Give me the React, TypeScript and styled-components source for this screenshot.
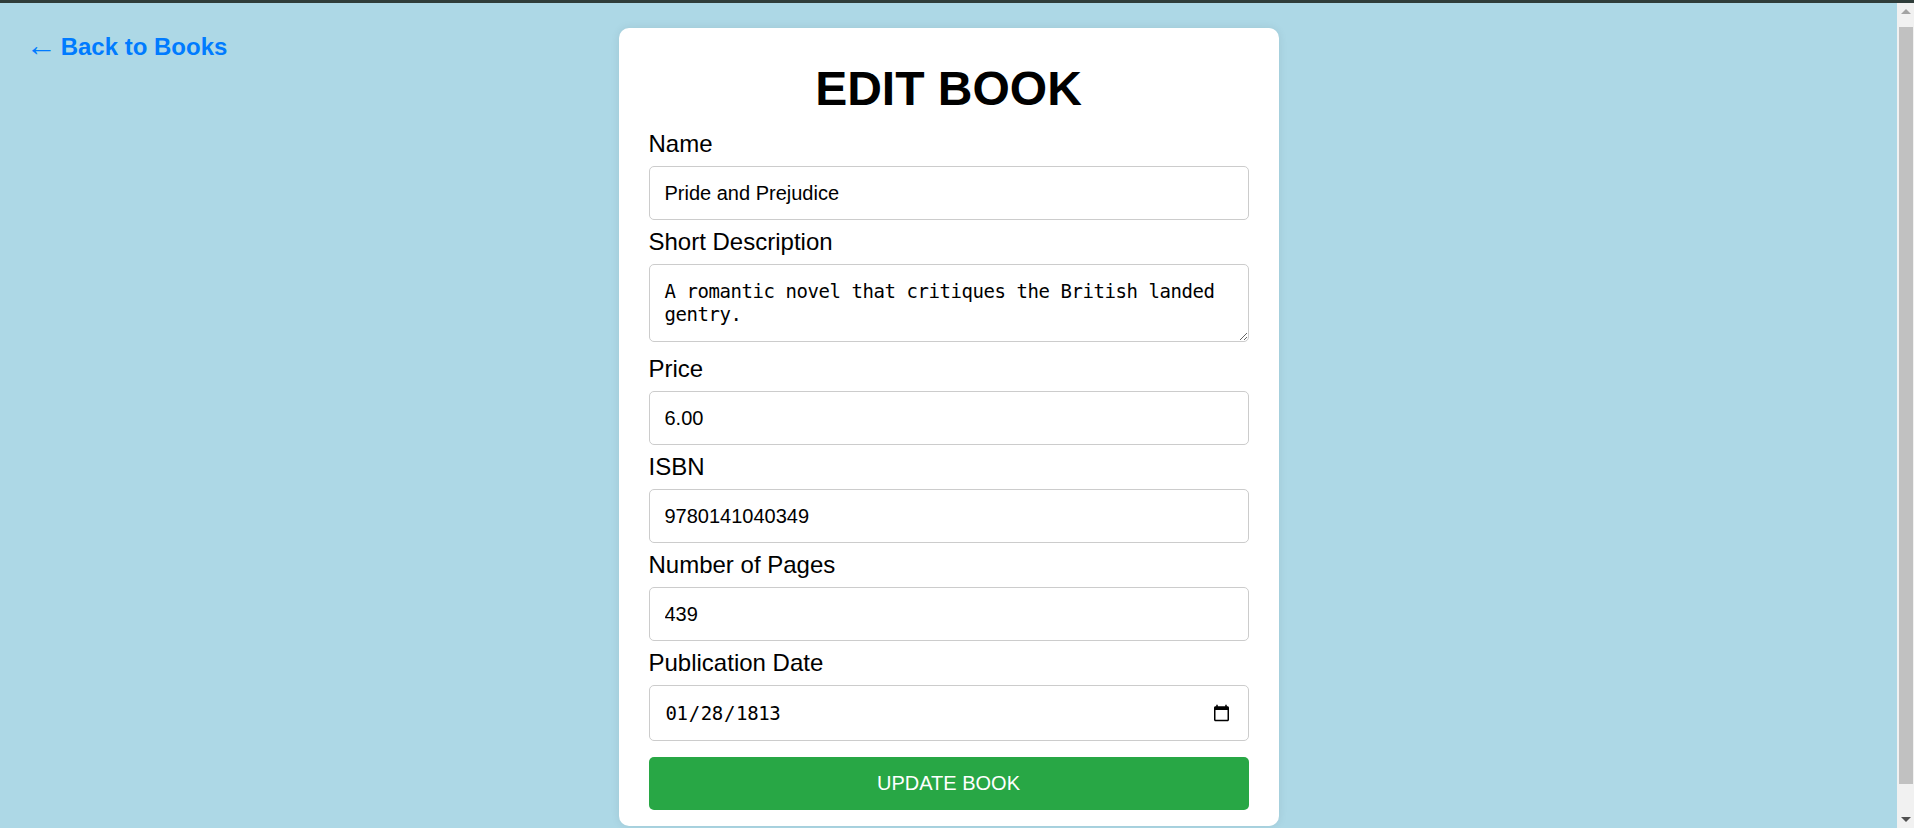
import React from "react";
import styled, { createGlobalStyle } from "styled-components";

const GlobalStyle = createGlobalStyle`
  html, body {
    margin: 0;
    padding: 0;
  }
  body {
    background: #add8e6;
    border-top: 3px solid #2f3d3a;
    padding-right: 17px;
    font-family: "Liberation Sans", Arial, sans-serif;
    color: #000;
  }
  * {
    box-sizing: border-box;
  }
`;

const Page = styled.div`
  display: grid;
  grid-template-columns: 1fr 660px 1fr;
  align-items: start;
  padding: 25px 0 44px;
`;

const NavCell = styled.div`
  padding: 5px 0 0 26px;
`;

const BackLink = styled.a`
  font-family: "Liberation Sans", Arial, sans-serif;
  font-size: 24px;
  font-weight: bold;
  color: #007bff;
  text-decoration: none;
  white-space: nowrap;
  cursor: pointer;
`;

const Arrow = styled.span`
  font-weight: normal;
  font-size: 31px;
  line-height: 0;
  vertical-align: -1px;
  margin-right: -3px;
`;

const Card = styled.div`
  background: #fff;
  border-radius: 10px;
  box-shadow: 0 0 10px rgba(0, 0, 0, 0.08);
  padding: 0 30px 16px;
`;

const Title = styled.h1`
  margin: 33px 0 14px;
  font-size: 48px;
  font-weight: bold;
  text-align: center;
  line-height: normal;
`;

const Form = styled.form`
  display: flex;
  flex-direction: column;
  gap: 8px;
`;

const Label = styled.label`
  display: block;
  font-size: 24px;
  line-height: normal;
`;

const TextInput = styled.input`
  width: 100%;
  height: ${(p) => (p.type === "date" ? 56 : 54)}px;
  padding: 0 15px;
  border: 1px solid #ccc;
  border-radius: 5px;
  font-family: ${(p) =>
    p.type === "date"
      ? `"DejaVu Sans Mono", "Liberation Mono", monospace`
      : `"Liberation Sans", Arial, sans-serif`};
  font-size: ${(p) => (p.type === "date" ? 19 : 20)}px;
  letter-spacing: ${(p) => (p.type === "date" ? "-0.35px" : "normal")};
  color: #000;
  background: #fff;
  outline: none;
`;

const TextArea = styled.textarea`
  width: 100%;
  height: 78px;
  margin-bottom: 5px;
  padding: 15px;
  border: 1px solid #ccc;
  border-radius: 5px;
  font-family: "DejaVu Sans Mono", "Liberation Mono", monospace;
  font-size: 19px;
  letter-spacing: -0.44px;
  line-height: 23px;
  color: #000;
  background: #fff;
  outline: none;
`;

const SubmitButton = styled.button`
  margin-top: 8px;
  width: 100%;
  height: 53px;
  border: none;
  border-radius: 5px;
  background: #28a745;
  color: #fff;
  font-family: "Liberation Sans", Arial, sans-serif;
  font-size: 20px;
  cursor: pointer;
`;

/* Fake window scrollbar drawn over the right edge */
const ScrollBar = styled.div`
  position: fixed;
  top: 3px;
  right: 0;
  bottom: 0;
  width: 17px;
  background: #f1f1f1;
  display: flex;
  flex-direction: column;
`;

const ScrollArrow = styled.div<{ $dir: "up" | "down" }>`
  height: 17px;
  flex: none;
  display: flex;
  align-items: center;
  justify-content: center;
  &::after {
    content: "";
    width: 0;
    height: 0;
    border-left: 5px solid transparent;
    border-right: 5px solid transparent;
    ${(p) =>
      p.$dir === "up"
        ? "border-bottom: 5px solid #a3a3a3;"
        : "border-top: 5px solid #505050;"}
  }
`;

const ScrollTrack = styled.div`
  flex: 1;
  padding: 7px 1px 27px 2px;
  display: flex;
  flex-direction: column;
`;

const ScrollThumb = styled.div`
  flex: 1;
  background: #c1c1c1;
`;

type Field = {
  id: string;
  label: string;
  value: string;
  type?: string;
  multiline?: boolean;
};

const fields: Field[] = [
  { id: "name", label: "Name", value: "Pride and Prejudice" },
  {
    id: "desc",
    label: "Short Description",
    value: "A romantic novel that critiques the British landed gentry.",
    multiline: true,
  },
  { id: "price", label: "Price", value: "6.00" },
  { id: "isbn", label: "ISBN", value: "9780141040349" },
  { id: "pages", label: "Number of Pages", value: "439" },
  { id: "date", label: "Publication Date", value: "1813-01-28", type: "date" },
];

export default function App() {
  return (
    <>
      <GlobalStyle />
      <Page>
        <NavCell>
          <BackLink href="#">
            <Arrow>←</Arrow> Back to Books
          </BackLink>
        </NavCell>
        <Card>
          <Title>EDIT BOOK</Title>
          <Form onSubmit={(e) => e.preventDefault()}>
            {fields.map((f) => (
              <React.Fragment key={f.id}>
                <Label htmlFor={f.id}>{f.label}</Label>
                {f.multiline ? (
                  <TextArea id={f.id} defaultValue={f.value} />
                ) : (
                  <TextInput id={f.id} type={f.type || "text"} defaultValue={f.value} />
                )}
              </React.Fragment>
            ))}
            <SubmitButton type="submit">UPDATE BOOK</SubmitButton>
          </Form>
        </Card>
        <div />
      </Page>
      <ScrollBar aria-hidden="true">
        <ScrollArrow $dir="up" />
        <ScrollTrack>
          <ScrollThumb />
        </ScrollTrack>
        <ScrollArrow $dir="down" />
      </ScrollBar>
    </>
  );
}
